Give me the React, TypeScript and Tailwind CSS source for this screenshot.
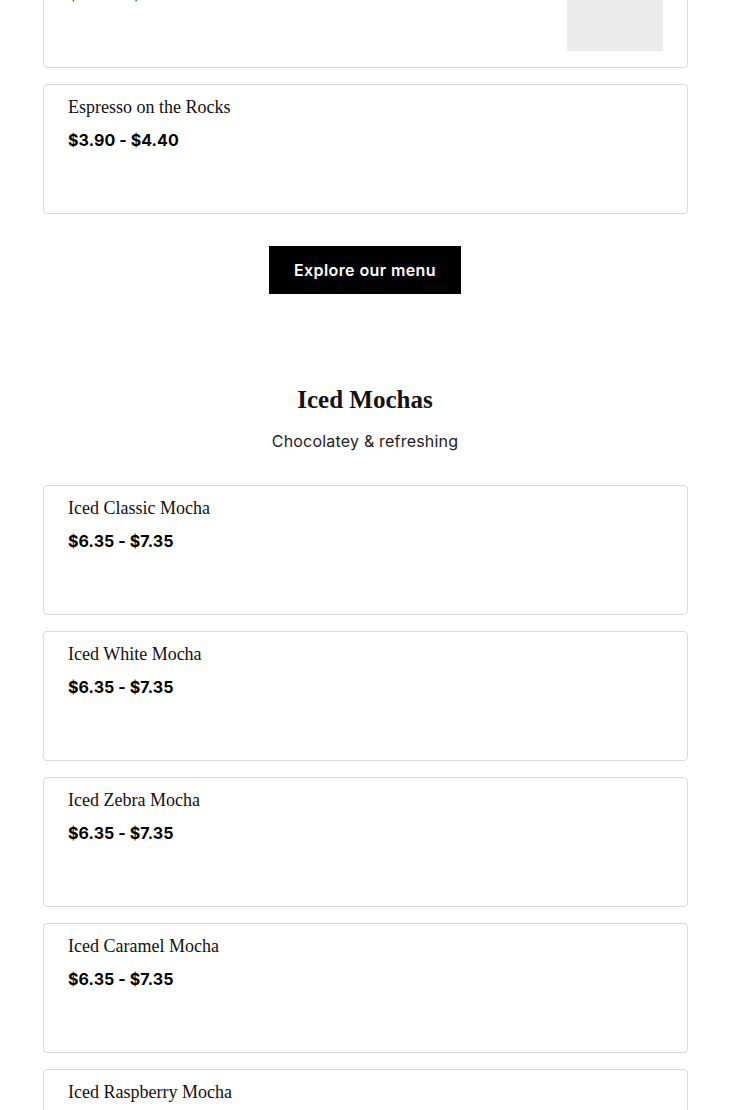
const serif = "font-['Liberation_Serif',serif]"
const sans = "font-['Inter',sans-serif]"

type Item = { name: string; price: string; image?: boolean }

const mochas: Item[] = [
  { name: 'Iced Classic Mocha', price: '$6.35 - $7.35' },
  { name: 'Iced White Mocha', price: '$6.35 - $7.35' },
  { name: 'Iced Zebra Mocha', price: '$6.35 - $7.35' },
  { name: 'Iced Caramel Mocha', price: '$6.35 - $7.35' },
  { name: 'Iced Raspberry Mocha', price: '$6.35 - $7.35' },
]

function MenuCard({ item }: { item: Item }) {
  return (
    <div className="flex h-[130px] justify-between rounded-[4px] border border-[#dadada] bg-white pl-6 pr-6 pt-[10px]">
      <div>
        <h3 className={`${serif} text-[18px] leading-6 text-[#111]`}>{item.name}</h3>
        <p className={`${sans} mt-[9px] text-[16px] font-bold leading-6 tracking-[0.1px] text-black`}>{item.price}</p>
      </div>
      {item.image && <div className="mb-4 h-[96px] w-[96px] self-end bg-[#ebebeb]" />}
    </div>
  )
}

export default function App() {
  return (
    <div className="min-h-[1110px] overflow-hidden bg-white">
      <div className="-mt-[62px] pl-[43px] pr-[42px]">
        {/* Previous section, scrolled past */}
        <div className="flex flex-col gap-4">
          <MenuCard item={{ name: 'Espresso', price: '$3.90 - $4.40', image: true }} />
          <MenuCard item={{ name: 'Espresso on the Rocks', price: '$3.90 - $4.40' }} />
        </div>
        <div className="mr-px mt-8 flex justify-center">
          <button className={`${sans} h-12 w-[192px] bg-black text-[16px] font-semibold tracking-[0.4px] text-white`}>
            Explore our menu
          </button>
        </div>

        {/* Iced Mochas */}
        <section className="mr-px mt-[90px] text-center">
          <h2 className={`${serif} text-[25px] font-bold leading-8 text-[#111]`}>Iced Mochas</h2>
          <p className={`${sans} mt-[13px] text-[16px] leading-6 tracking-[0.2px] text-[#222]`}>Chocolatey &amp; refreshing</p>
        </section>
        <div className="mt-8 flex flex-col gap-4 text-left">
          {mochas.map(m => (
            <MenuCard key={m.name} item={m} />
          ))}
        </div>
      </div>
    </div>
  )
}
